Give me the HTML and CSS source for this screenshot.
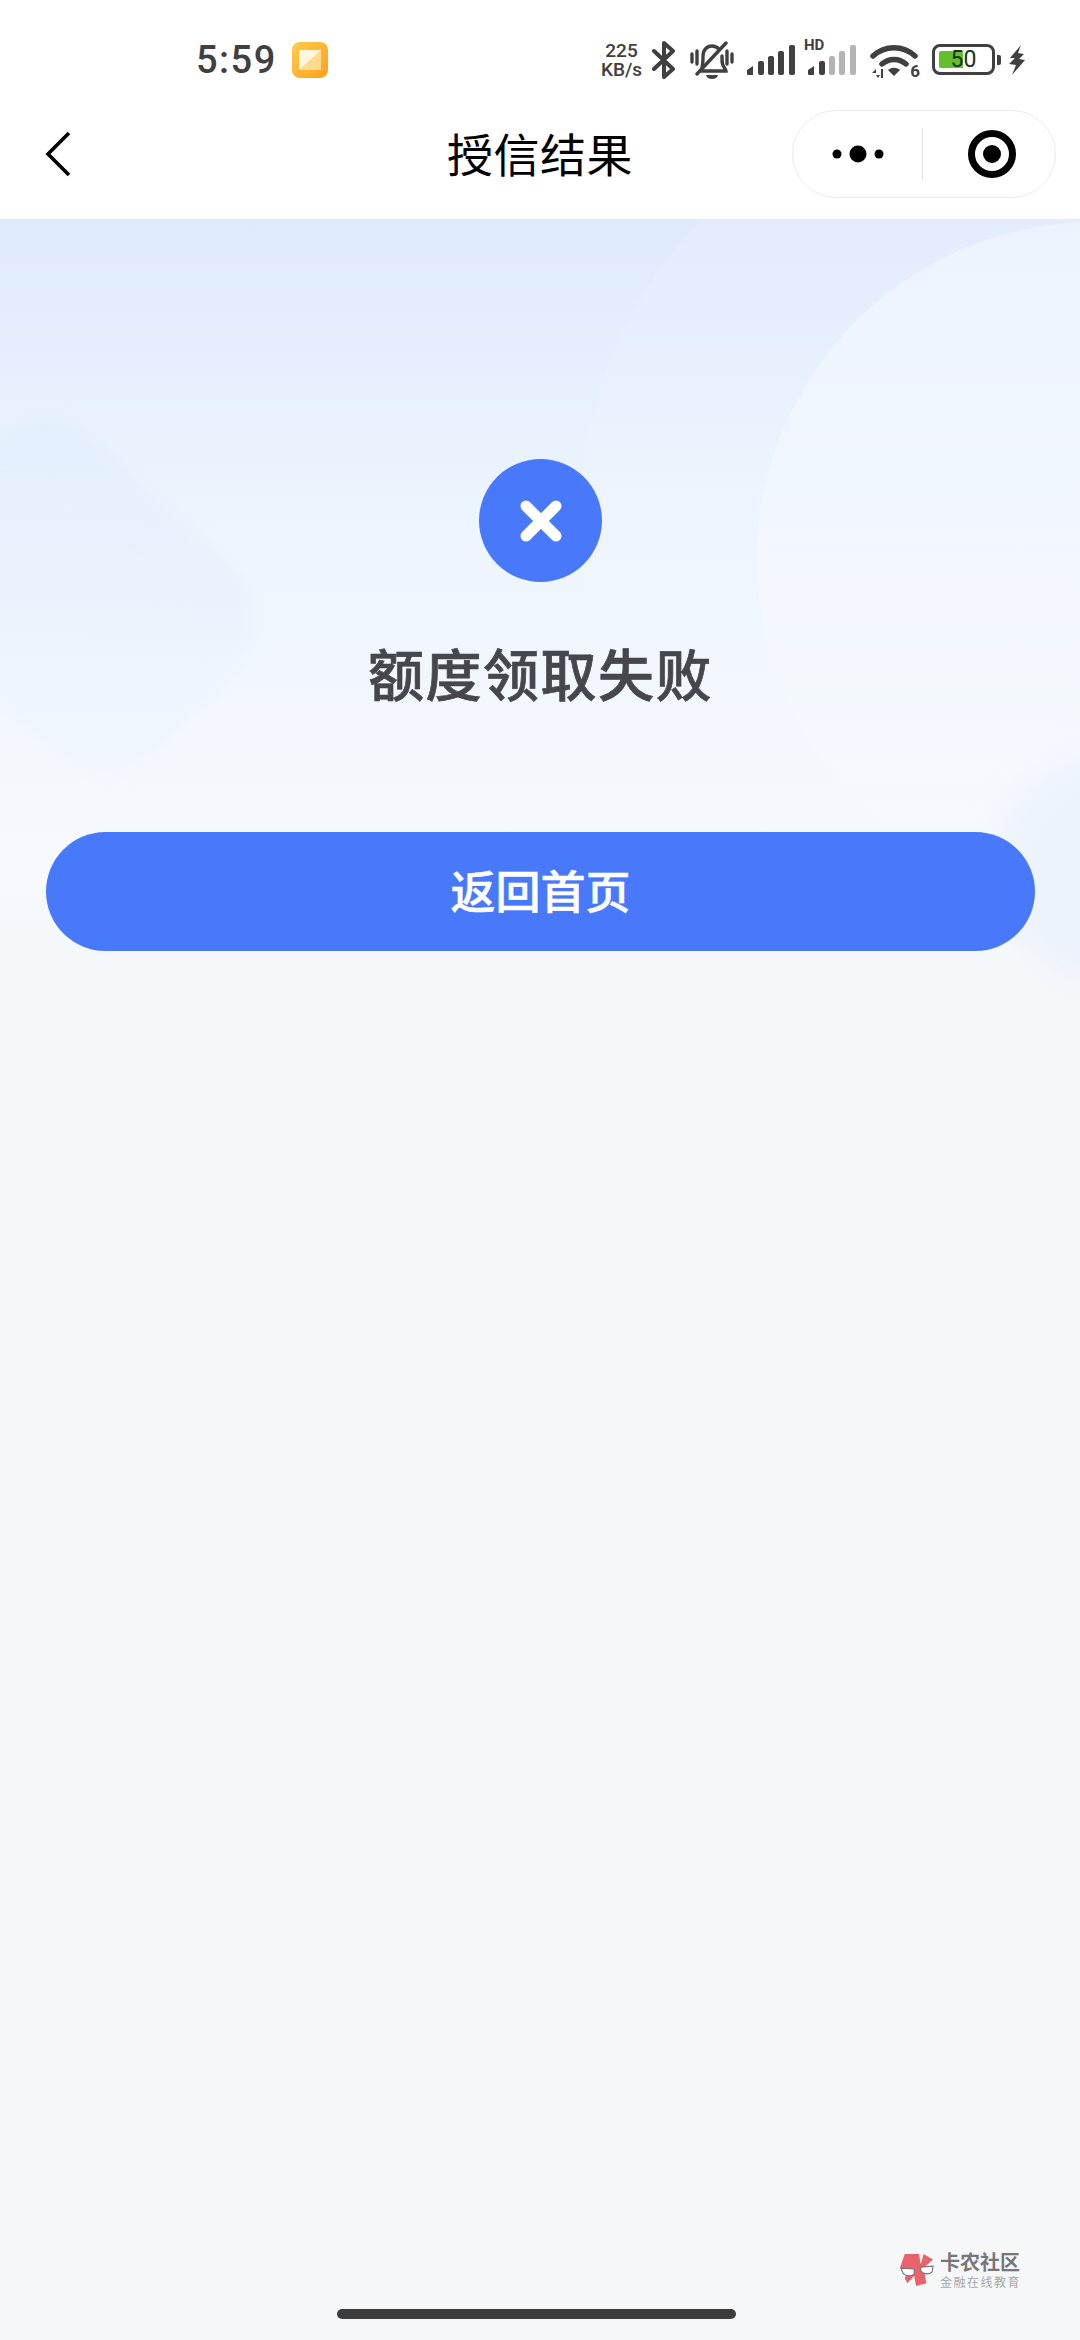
FILE: index.html
```html
<!DOCTYPE html>
<html lang="zh-CN">
<head>
  <meta charset="UTF-8" />
  <meta name="viewport" content="width=device-width, initial-scale=1.0" />
  <title>授信结果</title>
  <link rel="stylesheet" href="styles.css">
</head>
<body>
  <div class="page">
    <div class="status-bar">
      <span class="clock">5:59</span>
      <svg class="app-icon" viewBox="0 0 36 36">
        <defs>
          <linearGradient id="appFill" x1="0" y1="0" x2="1" y2="1">
            <stop offset="0" stop-color="#ffcc4d" />
            <stop offset="1" stop-color="#ff9f1c" />
          </linearGradient>
        </defs>
        <rect width="36" height="36" rx="8" fill="url(#appFill)" />
        <rect x="7" y="8" width="22" height="20" fill="#ffd98c" />
        <path d="M7 8h22L7 28z" fill="#fff6de" />
      </svg>
      <div class="status-icons">
        <div class="speed"><span>225</span><span>KB/s</span></div>
        <svg class="ic-bt" viewBox="0 0 24 38">
          <path d="M2 10l19 18-9 8V2l9 8L2 28" fill="none" stroke="#404040" stroke-width="4" stroke-linejoin="round" stroke-linecap="round" />
        </svg>
        <svg class="ic-bell" viewBox="0 0 44 38">
          <g fill="none" stroke="#404040" stroke-width="3.4" stroke-linecap="round">
            <path d="M12 26c1-3 1-6 1-11 0-6 4-10 9-10 3 0 5 1 7 3" />
            <path d="M32 15c0 6 0 9 2 11 1 2 2 3 2 4H11" />
            <path d="M36 2L7 33" />
            <path d="M2 13v8M7 10v13M37 10v13M42 13v8" />
          </g>
          <path d="M16 34h12c-1 3-3 4-6 4s-5-1-6-4z" fill="#404040" />
        </svg>
        <svg class="ic-signal" viewBox="0 0 48 32">
          <g fill="#404040">
            <path d="M0 26l6-4v9H1a1 1 0 0 1-1-1z" />
            <rect x="11" y="17" width="6" height="14" rx="2" />
            <rect x="21" y="12" width="6" height="19" rx="2" />
            <rect x="31" y="7" width="6" height="24" rx="2" />
            <rect x="42" y="1" width="6" height="30" rx="2" />
          </g>
        </svg>
        <div class="signal-hd">
          <span class="hd">HD</span>
          <svg class="ic-signal" viewBox="0 0 48 32">
            <path d="M0 26l6-4v9H1a1 1 0 0 1-1-1z" fill="#404040" />
            <rect x="11" y="17" width="6" height="14" rx="2" fill="#404040" />
            <rect x="21" y="12" width="6" height="19" rx="2" fill="#b4b4b4" />
            <rect x="31" y="7" width="6" height="24" rx="2" fill="#b4b4b4" />
            <rect x="42" y="1" width="6" height="30" rx="2" fill="#b4b4b4" />
          </svg>
        </div>
        <div class="wifi">
          <svg class="ic-wifi" viewBox="0 0 48 36">
            <g fill="none" stroke="#404040" stroke-width="5.5" stroke-linecap="round">
              <path d="M3 14c12-11 30-11 42 0" />
              <path d="M12 22c7-6 17-6 24 0" />
            </g>
            <path d="M18 28c4-3 8-3 12 0l-6 6z" fill="#404040" />
            <path d="M2 31l4-4v4zM6 33h4l-2 3zM11 27h2v9h-2z" fill="#404040" />
          </svg>
          <span class="wifi-num">6</span>
        </div>
        <div class="battery">
          <div class="battery-body">
            <div class="battery-fill"></div>
            <span class="battery-num">50</span>
          </div>
          <div class="battery-nub"></div>
        </div>
        <svg class="ic-bolt" viewBox="0 0 17 30">
          <path d="M12 0L1 13h5L0 19l7 1-4 10 13-15-6-1 5-5-6-1z" fill="#404040" />
        </svg>
      </div>
    </div>

    <nav class="nav-bar">
      <svg class="back" viewBox="0 0 26 46">
        <path d="M24 2L3 23l21 21" fill="none" stroke="#000" stroke-width="3.6" />
      </svg>
      <div class="nav-title">授信结果</div>
      <div class="capsule">
        <div class="capsule-btn more-btn">
          <svg class="ic-more" viewBox="0 0 52 18">
            <circle cx="5" cy="9" r="4.5" />
            <circle cx="26" cy="9" r="8.5" />
            <circle cx="47" cy="9" r="4.5" />
          </svg>
        </div>
        <div class="capsule-line"></div>
        <div class="capsule-btn target-btn">
          <svg class="ic-target" viewBox="0 0 50 50">
            <circle cx="25" cy="25" r="20.5" fill="none" stroke="#000" stroke-width="7" />
            <circle cx="25" cy="25" r="9" />
          </svg>
        </div>
      </div>
    </nav>

    <main class="result">
      <svg class="hero-art" viewBox="0 0 1080 800">
        <defs>
          <linearGradient id="heroFade" x1="0" y1="0" x2="0" y2="1">
            <stop offset="0" stop-color="#dfeafd" />
            <stop offset="0.35" stop-color="#ecf4fd" />
            <stop offset="0.65" stop-color="#f4f8fe" />
            <stop offset="0.82" stop-color="#f6f9fd" />
            <stop offset="1" stop-color="#f5f7f9" />
          </linearGradient>
          <linearGradient id="softWhite" x1="0" y1="0" x2="0" y2="1">
            <stop offset="0" stop-color="#fff" stop-opacity="0.4" />
            <stop offset="0.6" stop-color="#fff" stop-opacity="0.18" />
            <stop offset="1" stop-color="#fff" stop-opacity="0" />
          </linearGradient>
          <linearGradient id="softBlue" x1="0" y1="0" x2="1" y2="1">
            <stop offset="0" stop-color="#dcecfc" stop-opacity="0.5" />
            <stop offset="1" stop-color="#e4f0fd" stop-opacity="0.15" />
          </linearGradient>
          <filter id="blur8" x="-30%" y="-30%" width="160%" height="160%">
            <feGaussianBlur stdDeviation="8" />
          </filter>
          <filter id="blur16" x="-50%" y="-50%" width="200%" height="200%">
            <feGaussianBlur stdDeviation="16" />
          </filter>
        </defs>
        <rect width="1080" height="800" fill="url(#heroFade)" />
        <circle cx="1010" cy="300" r="430" fill="url(#softWhite)" opacity="0.3" />
        <circle cx="1095" cy="341" r="338" fill="url(#softWhite)" />
        <rect x="-90" y="250" width="330" height="260" rx="70" transform="rotate(42 75 380)" fill="url(#softBlue)" filter="url(#blur8)" />
        <circle cx="1110" cy="650" r="115" fill="#e8f0fb" opacity="0.6" filter="url(#blur16)" />
      </svg>
      <div class="fail-icon">
        <svg viewBox="0 0 42 42">
          <path d="M6 6l30 30M36 6L6 36" fill="none" stroke="#fff" stroke-width="11" stroke-linecap="round" />
        </svg>
      </div>
      <h1 class="result-title">额度领取失败</h1>
      <button class="home-btn">返回首页</button>
    </main>

    <div class="watermark">
      <svg class="wm-logo" viewBox="0 0 36 36">
        <path d="M5 1h15l2 11 3-11 10 6-10 9 3 16-11 3-2-11-7 8-3-5 4-10-9-1z" fill="#e9636d" />
        <path d="M1 16l14 1v5c-3 3-10 3-12-1zM22 15l13-1-1 6c-3 3-9 3-12-1z" fill="#fff" stroke="#77777a" stroke-width="1.2" />
      </svg>
      <div class="wm-text">
        <span class="wm-name">卡农社区</span>
        <span class="wm-sub">金融在线教育</span>
      </div>
    </div>
    <div class="home-bar"></div>
  </div>
</body>
</html>
```

FILE: styles.css
```css
* {
  box-sizing: border-box;
}

body {
  margin: 0;
  background: #f5f7f9;
  font-family: "Noto Sans CJK SC", Roboto, sans-serif;
}

.page {
  position: relative;
  width: 1080px;
  height: 2340px;
  display: flex;
  flex-direction: column;
  overflow: hidden;
}

/* status bar */
.status-bar {
  height: 100px;
  background: #fff;
  display: flex;
  align-items: center;
  padding: 19px 54px 0 196px;
  flex-shrink: 0;
}

.clock {
  width: 96px;
  font-family: Roboto, sans-serif;
  font-size: 38px;
  font-weight: 500;
  letter-spacing: 1.5px;
  line-height: 1;
  color: #404040;
}

.app-icon {
  width: 36px;
  height: 36px;
}

.status-icons {
  margin-left: auto;
  display: flex;
  align-items: center;
}

.speed {
  width: 43px;
  display: flex;
  flex-direction: column;
  align-items: center;
  font-family: Roboto, sans-serif;
  font-size: 19px;
  font-weight: 500;
  line-height: 19px;
  color: #404040;
}

.ic-bt {
  width: 24px;
  height: 38px;
  margin-left: 9px;
}

.ic-bell {
  width: 44px;
  height: 38px;
  margin-left: 14px;
}

.ic-signal {
  display: block;
  width: 48px;
  height: 32px;
}

.status-icons > .ic-signal {
  margin-left: 13px;
}

.signal-hd {
  position: relative;
  margin-left: 13px;
}

.hd {
  position: absolute;
  left: -4px;
  top: -6px;
  font-family: Roboto, sans-serif;
  font-size: 15px;
  font-weight: 700;
  line-height: 1;
  color: #404040;
}

.wifi {
  position: relative;
  width: 48px;
  height: 36px;
  margin-left: 14px;
}

.ic-wifi {
  display: block;
  width: 48px;
  height: 36px;
}

.wifi-num {
  position: absolute;
  right: -2px;
  bottom: -2px;
  font-family: Roboto, sans-serif;
  font-size: 17px;
  font-weight: 700;
  line-height: 17px;
  color: #404040;
}

.battery {
  display: flex;
  align-items: center;
  margin-left: 14px;
}

.battery-body {
  position: relative;
  width: 63px;
  height: 31px;
  border: 3px solid #404040;
  border-radius: 8px;
  display: flex;
  align-items: center;
  justify-content: center;
}

.battery-fill {
  position: absolute;
  left: 4px;
  top: 4px;
  bottom: 4px;
  width: 24px;
  background: #62bf2e;
  border-radius: 2px 0 0 2px;
}

.battery-num {
  position: relative;
  font-family: Roboto, sans-serif;
  font-size: 23px;
  line-height: 1;
  color: #1c3313;
}

.battery-nub {
  width: 4px;
  height: 10px;
  margin-left: 2px;
  background: #404040;
  border-radius: 0 2px 2px 0;
}

.ic-bolt {
  width: 17px;
  height: 30px;
  margin-left: 8px;
}

/* nav */
.nav-bar {
  height: 119px;
  background: #fff;
  display: grid;
  grid-template-columns: minmax(0, 1fr) auto minmax(0, 1fr);
  align-items: center;
  padding: 0 24px 12px;
  flex-shrink: 0;
}

.back {
  width: 26px;
  height: 46px;
  margin-left: 21px;
}

.nav-title {
  font-size: 46px;
  letter-spacing: 0.5px;
  line-height: 50px;
  margin-top: -3px;
  color: #000;
}

.capsule {
  justify-self: end;
  width: 264px;
  height: 88px;
  border: 1.5px solid #ececec;
  border-radius: 44px;
  display: flex;
  align-items: center;
}

.capsule-btn {
  flex: 1;
  display: flex;
  align-items: center;
  justify-content: center;
}

.more-btn {
  padding-left: 2px;
}

.target-btn {
  padding-left: 6px;
}

.capsule-line {
  width: 1px;
  height: 52px;
  background: #e4e4e4;
}

.ic-more {
  width: 52px;
  height: 18px;
}

.ic-target {
  width: 50px;
  height: 50px;
}

/* result */
.result {
  position: relative;
  flex: 1;
  display: flex;
  flex-direction: column;
  align-items: center;
  padding: 240px 45px 0 46px;
}

.hero-art {
  position: absolute;
  left: 0;
  top: 0;
  width: 1080px;
  height: 800px;
}

.fail-icon {
  position: relative;
  width: 123px;
  height: 123px;
  border-radius: 50%;
  background: #4979fb;
  display: flex;
  align-items: center;
  justify-content: center;
}

.fail-icon svg {
  width: 42px;
  height: 42px;
}

.result-title {
  position: relative;
  margin: 50px 0 0;
  font-size: 56px;
  font-weight: 500;
  -webkit-text-stroke: 0.7px #45474d;
  letter-spacing: 1.5px;
  line-height: 80px;
  color: #45474d;
}

.home-btn {
  position: relative;
  width: 100%;
  height: 119px;
  margin-top: 120px;
  padding-bottom: 6px;
  border: none;
  border-radius: 60px;
  background: #4979fb;
  color: #fff;
  font-family: inherit;
  font-size: 45px;
  font-weight: 500;
  -webkit-text-stroke: 0.5px #fff;
}

/* bottom */
.watermark {
  position: absolute;
  left: 900px;
  top: 2250px;
  display: flex;
  gap: 6px;
  align-items: center;
}

.wm-logo {
  width: 34px;
  height: 36px;
}

.wm-text {
  display: flex;
  flex-direction: column;
}

.wm-name {
  font-size: 20px;
  font-weight: 700;
  line-height: 24px;
  color: #77777a;
}

.wm-sub {
  font-size: 12px;
  letter-spacing: 1.5px;
  line-height: 15px;
  color: #a6a7aa;
}

.home-bar {
  position: absolute;
  left: 337px;
  top: 2309px;
  width: 399px;
  height: 10px;
  border-radius: 5px;
  background: #3c3c3c;
}
```
